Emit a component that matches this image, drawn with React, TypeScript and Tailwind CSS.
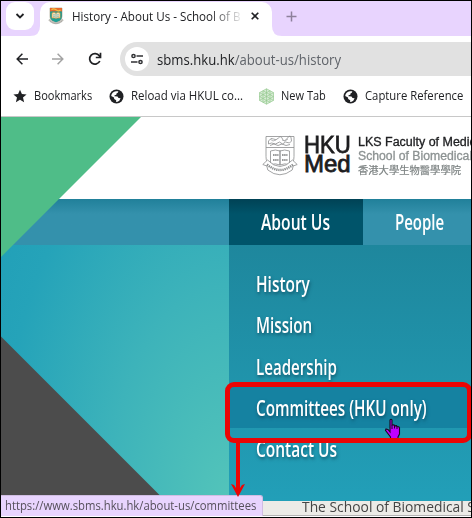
import { useLayoutEffect, useRef, type ReactNode } from 'react';

const ui = "font-['Open_Sans','Noto_Sans',sans-serif]";
const shadow = '[text-shadow:1px_2px_4px_rgba(0,40,60,0.55)]';

/** One line of text, condensed or widened to the given width. */
function Fit({ width, className = '', children }: { width: number; className?: string; children: ReactNode }) {
  const ref = useRef<HTMLSpanElement>(null);
  useLayoutEffect(() => {
    const el = ref.current;
    if (el) el.style.transform = `scaleX(${width / el.offsetWidth})`;
  }, [width]);
  return (
    <span className={`block shrink-0 whitespace-nowrap ${className}`} style={{ width }}>
      <span ref={ref} className="inline-block origin-left">{children}</span>
    </span>
  );
}

function Globe() {
  return (
    <svg width="15" height="15" viewBox="0 0 15 15" className="shrink-0">
      <circle cx="7.5" cy="7.5" r="7" fill="#202124" />
      <path d="M7 2.200 9.300 2.300 9 3.600 7.500 4.400 7.300 5.800 5.600 6.200 5.400 7.300 8.500 7.400 9.500 9.100 11.600 9.300 10.300 11.800 8.600 12.800 7.100 12.900 7.200 11.200 5.200 10.100 5 8.600 2.200 7C2.400 4.500 4.300 2.500 7 2.200Z" fill="#fff" />
    </svg>
  );
}

function Crest() {
  return (
    <svg width="16" height="18" viewBox="1 0 16 18" className="shrink-0">
      <path d="M3 1h12v8c0 4-2.6 5.5-6 7-3.400-1.500-6-3-6-7Z" fill="#1da095" stroke="#8b8060" strokeWidth=".5" />
      <path d="M3 1h12v3.400H3Z" fill="#e8692f" />
      <path d="M4.500 2.800q2-2 4.500 0t4.500 0" stroke="#f0c244" strokeWidth="1.200" fill="none" />
      <path d="M5 6q2.300-1 4 .3 1.700-1.300 4-.3v5q-2.300-.6-4 .5Q7.300 10.400 5 11Z" fill="#f8edc9" stroke="#e79435" strokeWidth=".7" />
      <path d="M9 6.300V11.500M6.200 7.800h1.600M10.200 7.800h1.600M6.200 9.300h1.600M10.200 9.300h1.600" stroke="#4d9398" strokeWidth=".7" />
      <path d="M2 12.500Q9 20 16 12.500" stroke="#bfbdb7" strokeWidth="2" fill="none" />
      <path d="M3 14.300Q9 18.800 15 14.300" stroke="#888" strokeWidth=".5" strokeDasharray="1 1" fill="none" />
    </svg>
  );
}

function LogoCrest() {
  return (
    <svg width="36" height="42" viewBox="0 0 36 42" className="shrink-0" fill="none" stroke="#8b8d8e" strokeWidth=".8">
      <path d="M4 1.500h28v20c0 8-5 12-14 16-9-4-14-8-14-16Z" />
      <path d="M4 12.500h28" />
      <path d="M6.500 6q2.500-4 5-2t5-1 4 1 5-1 4 3l-2 2-4-1-3 2-3-2-4 2-4-1-3 1ZM8 10.500l4-1.500 4 1.500 4-1.500 4 1.500 4-1" />
      <path d="m8 4 3 2 3-1M20 5l3 1 3-2" stroke="#a5a7a8" />
      <path d="M8.500 16q5-2 9.500 0 4.500-2 9.500 0v13.500q-5-1.500-9.500.5-4.500-2-9.500-.500Z" />
      <path d="M18 15.500V30" strokeWidth="1.300" />
      <path d="M11 20h5.500M11 25h5.500M20 20h5.500M20 25h5.500" stroke="#77797a" strokeWidth="1.500" strokeDasharray="1.600 .5" />
      <path d="M5.500 25 .800 29.500l4 1.500 1 4q12 9.500 24.400 0l1-4 4-1.500-4.700-4.500q-12.500 13-25 0Z" fill="#fff" />
      <path d="M5 29.500q13 11 26 0" stroke="#8a8c8d" strokeWidth="2.400" strokeDasharray="1.300 .8" />
    </svg>
  );
}

function HexIcon() {
  return (
    <svg width="17" height="17" viewBox="0 0 17 17" className="shrink-0" fill="none" stroke="#96ca91" strokeWidth=".7">
      <path d="M8.500.8 15.500 4.600v7.800l-7 3.800-7-3.800V4.600Z" fill="#d8ecd6" />
      <path d="M8.500.8v15.400M5 2.700v11.700M12 2.700v11.700M1.500 4.600l14 7.800M15.500 4.600l-14 7.800M5 2.700l10.500 6M12 2.700l-10.500 6M1.500 8.500l10.500 6M15.500 8.500l-10.500 6" />
    </svg>
  );
}

function TabStrip() {
  return (
    <div className="flex h-[35px] shrink-0 bg-[#e8d4fe]">
      <div className="mt-px ml-[5px] flex h-7 w-7 items-center justify-center rounded-[9px] bg-white">
        <svg width="10" height="8" viewBox="0 0 10 8"><path d="m1.500 2 3.500 3.500L8.500 2" fill="none" stroke="#202124" strokeWidth="1.800" /></svg>
      </div>
      <div className="relative mt-px ml-[6px] flex h-[34px] w-[232px] items-start rounded-t-[10px] bg-white pt-[5px] pl-[8px]">
        <svg className="absolute bottom-0 -left-[10px]" width="10" height="10"><path d="M10 0v10H0Q10 10 10 0Z" fill="#fff" /></svg>
        <svg className="absolute -right-[10px] bottom-0" width="10" height="10"><path d="M0 0v10h10Q0 10 0 0Z" fill="#fff" /></svg>
        <Crest />
        <div className="ml-[8px] w-[171px] overflow-hidden [mask-image:linear-gradient(to_right,#000_138px,transparent_172px)]">
          <Fit width={168} className="text-[13px] leading-[18px] text-[#202124]">History - About Us - School of B</Fit>
        </div>
        <svg className="mt-[5px] ml-[8px]" width="8" height="8" viewBox="0 0 8 8"><path d="m.7.7 6.600 6.600m0-6.600L.7 7.300" stroke="#202124" strokeWidth="1.600" /></svg>
      </div>
      <svg className="mt-[10px] ml-[14px]" width="11" height="11"><path d="M5.500.500v10M.500 5.500h10" stroke="#8d809b" strokeWidth="1.500" /></svg>
    </div>
  );
}

function Toolbar() {
  return (
    <div className="flex h-[46px] shrink-0 items-center bg-white">
      <svg className="ml-[15px] shrink-0" width="12" height="12" viewBox="0 0 12 12" fill="none" stroke="#202124" strokeWidth="1.500"><path d="M12 6H1.200M6.400.8 1.200 6l5.200 5.200" /></svg>
      <svg className="ml-[24px] shrink-0" width="12" height="12" viewBox="0 0 12 12" fill="none" stroke="#a3a3a3" strokeWidth="1.500"><path d="M0 6h10.800M5.600.8 10.800 6l-5.200 5.200" /></svg>
      <svg className="ml-[24px] shrink-0" width="14" height="14" viewBox="0 0 14 14" fill="none" stroke="#202124" strokeWidth="1.700"><path d="M11.800 9A5.300 5.300 0 1 1 11.300 3.800L12 4.700M12.500.8v4.700H7.800" /></svg>
      <div className="ml-[18px] flex h-[34px] grow items-center rounded-l-full bg-[#e1e1e1] pl-[5px]">
        <div className="flex h-6 w-6 shrink-0 items-center justify-center rounded-full bg-white">
          <svg width="12" height="12" viewBox="0 0 12 12" fill="none" stroke="#303134" strokeWidth="1.500"><circle cx="2.500" cy="3" r="1.600" /><path d="M5.500 3H12M0 9h6.500" /><circle cx="9.500" cy="9" r="1.600" /></svg>
        </div>
        <Fit width={184} className="ml-[8px] text-[15px] leading-5 text-[#60646a]"><span className="text-[#202124]">sbms.hku.hk</span>/about-us/history</Fit>
      </div>
    </div>
  );
}

function Bookmarks() {
  return (
    <div className="flex h-[35px] shrink-0 items-center border-b border-[#c8c8c8] bg-white pb-[6px] text-[12px] leading-4 text-[#202124]">
      <svg className="ml-[12px] shrink-0" width="14" height="14" viewBox="0 0 14 14"><path d="m7 .8 1.900 4.300 4.700.4L10 8.600l1.100 4.600L7 10.700l-4.100 2.500L4 8.600.4 5.500l4.700-.4Z" fill="#202124" /></svg>
      <Fit width={58} className="ml-[7px]">Bookmarks</Fit>
      <span className="ml-[17px]"><Globe /></span>
      <Fit width={112} className="ml-[7px]">Reload via HKUL co...</Fit>
      <span className="ml-[15px]"><HexIcon /></span>
      <Fit width={45} className="ml-[6px]">New Tab</Fit>
      <span className="ml-[17px]"><Globe /></span>
      <Fit width={98} className="ml-[7px]">Capture Reference</Fit>
    </div>
  );
}

function SiteHeader() {
  return (
    <div className="flex h-[82px] shrink-0 items-start bg-white pt-[18px] pl-[261px] font-['Liberation_Sans','Noto_Sans_CJK_TC',sans-serif]">
      <LogoCrest />
      <div className="ml-[6px] text-[24px] leading-[19px] text-[#1c1c1e] [-webkit-text-stroke:0.8px_#1c1c1e]">
        <Fit width={47}>HKU</Fit>
        <Fit width={47}>Med</Fit>
      </div>
      <div className="ml-[7px]">
        <Fit width={134} className="text-[12px] leading-[14px] text-[#202123] [-webkit-text-stroke:0.3px_#202123]">LKS Faculty of Medicine</Fit>
        <Fit width={167} className="text-[12px] leading-[14px] text-[#8c9292] [-webkit-text-stroke:0.3px_#8c9292]">School of Biomedical Sciences</Fit>
        <Fit width={103} className="text-[10px] leading-[15px] text-[#7c8282] [-webkit-text-stroke:0.2px_#7c8282]">香港大學生物醫學學院</Fit>
      </div>
    </div>
  );
}

function NavBar() {
  return (
    <div className="flex h-[46px] shrink-0 bg-[#3491ac] bg-linear-to-b from-[#20809a] to-[#3491ac] to-[15px] text-[22px] leading-[45px] font-semibold text-white">
      <div className="ml-[228px] w-[134px] shrink-0 bg-linear-to-b from-[#004255] to-[#00546a] to-[15px] pl-[32px]">
        <Fit width={69}>About Us</Fit>
      </div>
      <Fit width={49} className="ml-[32px]">People</Fit>
    </div>
  );
}

const items = [
  { label: 'History', width: 54 },
  { label: 'Mission', width: 56 },
  { label: 'Leadership', width: 81 },
  { label: 'Committees (HKU only)', width: 171, active: true },
  { label: 'Contact Us', width: 81 },
];

function Hero() {
  return (
    <div className="flex h-[256px] shrink-0">
      <div className="w-[228px] shrink-0 bg-[radial-gradient(ellipse_270px_480px_at_100%_100%,#53c4ba_0%,#3db3ba_45%,#25a3b9_85%,#22a0b8_100%)]" />
      <div className="grow bg-linear-to-b from-[#1e879d] to-[#229fb8] pt-[18px]">
        {items.map((item) => (
          <div key={item.label} className={`h-[41.3px] pl-[27px] text-[22px] leading-[40px] font-semibold text-white ${shadow} ${item.active ? 'bg-[#1582a1]' : ''}`}>
            <Fit width={item.width}>{item.label}</Fit>
          </div>
        ))}
      </div>
    </div>
  );
}

function HandCursor() {
  return (
    <svg className="absolute top-[417px] left-[383px]" width="18" height="23" viewBox="0 0 18 23">
      <path d="M6 2q1-1.600 2 0v5l2-.2.500 1 2-.2.500 1 1.800.2.700 1.200v6l-1.500 3v2.500H6.500V19l-5-6.500L2 11l2 .500L6 14Z" fill="#bf00ff" stroke="#16091d" strokeWidth="1.100" />
      <path d="M8 7v4M10.500 7.500v3M13 8.500v2.500" stroke="#16091d" strokeWidth="1" />
    </svg>
  );
}

export default function App() {
  return (
    <div className={`relative flex h-[518px] w-[472px] flex-col overflow-hidden border border-black ${ui}`}>
      <TabStrip />
      <Toolbar />
      <Bookmarks />
      <SiteHeader />
      <NavBar />
      <Hero />
      <div className="h-[14px] shrink-0 bg-[#ecebe7] pl-[301px] text-[14px] leading-[11px] text-[#454545]">
        <Fit width={183}>The School of Biomedical Sci</Fit>
      </div>
      <div className="h-px bg-[#b3b3b3]" />

      <svg className="absolute top-[116px] left-0" width="160" height="384">
        <path d="M0 0H140L0 140Z" fill="#4fbd88" />
        <path d="M0 219.500 160 379.500V384H0Z" fill="#4c4c4c" />
      </svg>
      <div className="absolute bottom-px left-0 h-[21px] w-[262px] rounded-tr-[3px] border-t border-r border-[#d0bde2] bg-[#e8d4fe] pl-[4px] text-[12px] leading-[20px] text-[#55505b]">
        <Fit width={251}>https://www.sbms.hku.hk/about-us/committees</Fit>
      </div>
      <HandCursor />
      <div className="absolute top-[381px] left-[224px] h-[61px] w-[247px] rounded-[9px] border-5 border-[#eb0505]" />
      <svg className="absolute top-[441px] left-[229px]" width="16" height="56"><path d="M8 0V49" stroke="#eb0505" strokeWidth="4" /><path d="M8 55 1 42 4 43 8 49l4-6 3-1Z" fill="#eb0505" /></svg>
    </div>
  );
}
